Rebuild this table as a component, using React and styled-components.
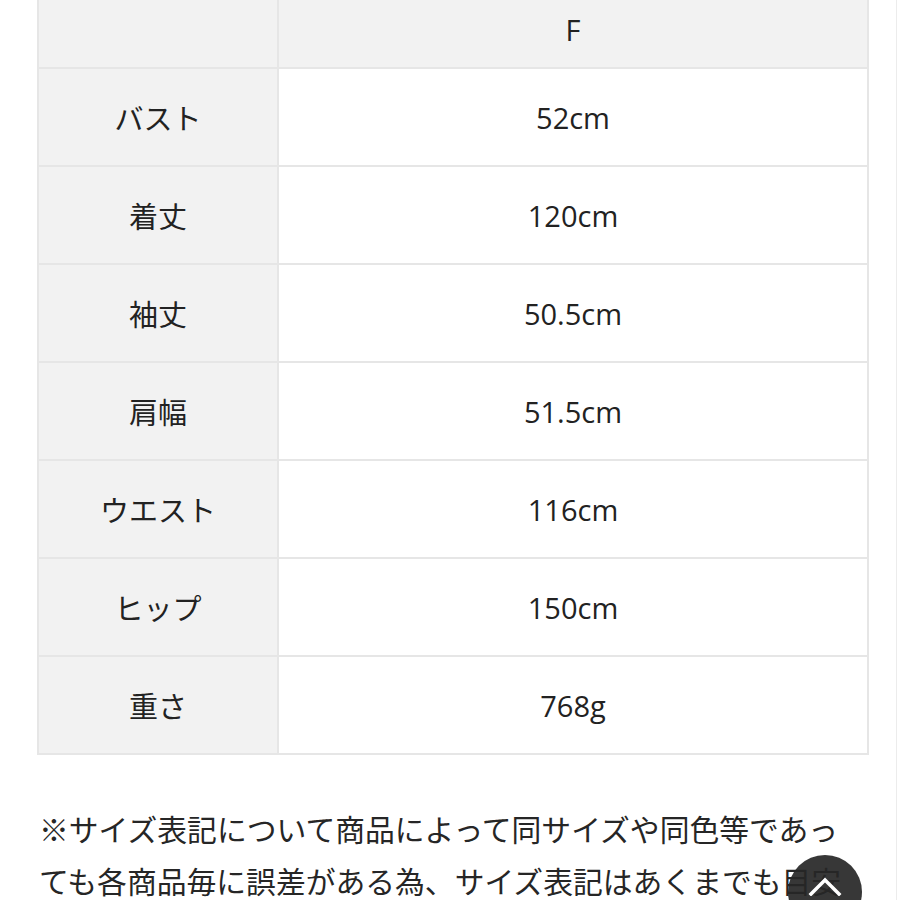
import React from "react";
import styled, { createGlobalStyle } from "styled-components";

const Global = createGlobalStyle`
  html, body { margin: 0; padding: 0; background: #fff; }
  body { font-family: "Open Sans", "Noto Sans CJK JP", sans-serif; color: #222; }
`;

const Page = styled.div`
  position: relative;
  width: 897px;
  height: 900px;
  overflow: hidden;
  border-right: 1px solid #ececec;
  box-sizing: border-box;
  padding: 0 27px 0 37px;
`;

const Table = styled.div`
  display: grid;
  grid-template-columns: 240px 1fr;
  border-left: 2px solid #e6e6e6;
  border-right: 2px solid #e6e6e6;
`;

const Cell = styled.div`
  box-sizing: border-box;
  height: ${(p) => (p.$head ? 69 : 98)}px;
  padding-bottom: ${(p) => (p.$head ? 9 : 0)}px;
  display: flex;
  align-items: center;
  justify-content: center;
  background: ${(p) => (p.$shaded ? "#f2f2f2" : "#ffffff")};
  border-bottom: 2px solid #e6e6e6;
  border-right: ${(p) => (p.$label ? "2px solid #e6e6e6" : "none")};
  font-size: 29px;
  color: #222;
`;

const Note = styled.p`
  margin: 47px 0 0 2px;
  font-family: "Noto Sans CJK JP", sans-serif;
  font-size: 29.8px;
  line-height: 52px;
  white-space: nowrap;
  color: #262626;
`;

const TopButton = styled.button`
  position: absolute;
  left: 788px;
  top: 855px;
  width: 74px;
  height: 74px;
  border: none;
  border-radius: 50%;
  background: rgba(38, 38, 38, 0.92);
  display: flex;
  align-items: flex-start;
  justify-content: center;
  padding-top: 21px;
  box-sizing: border-box;
`;

const rows = [
  ["バスト", "52cm"],
  ["着丈", "120cm"],
  ["袖丈", "50.5cm"],
  ["肩幅", "51.5cm"],
  ["ウエスト", "116cm"],
  ["ヒップ", "150cm"],
  ["重さ", "768g"],
];

export default function App() {
  return (
    <>
      <Global />
      <Page>
        <Table>
          <Cell $head $shaded $label />
          <Cell $head $shaded>F</Cell>
          {rows.map(([k, v]) => (
            <React.Fragment key={k}>
              <Cell $shaded $label>{k}</Cell>
              <Cell>{v}</Cell>
            </React.Fragment>
          ))}
        </Table>
        <Note>
          ※サイズ表記について商品によって同サイズや同色等であっ
          <br />
          ても各商品毎に誤差がある為、サイズ表記はあくまでも目安
        </Note>
        <TopButton aria-label="ページトップへ">
          <svg width="34" height="20" viewBox="0 0 34 20" fill="none">
            <path d="M3 18 L17 4 L31 18" stroke="#fff" strokeWidth="3.5" strokeLinecap="square" />
          </svg>
        </TopButton>
      </Page>
    </>
  );
}
